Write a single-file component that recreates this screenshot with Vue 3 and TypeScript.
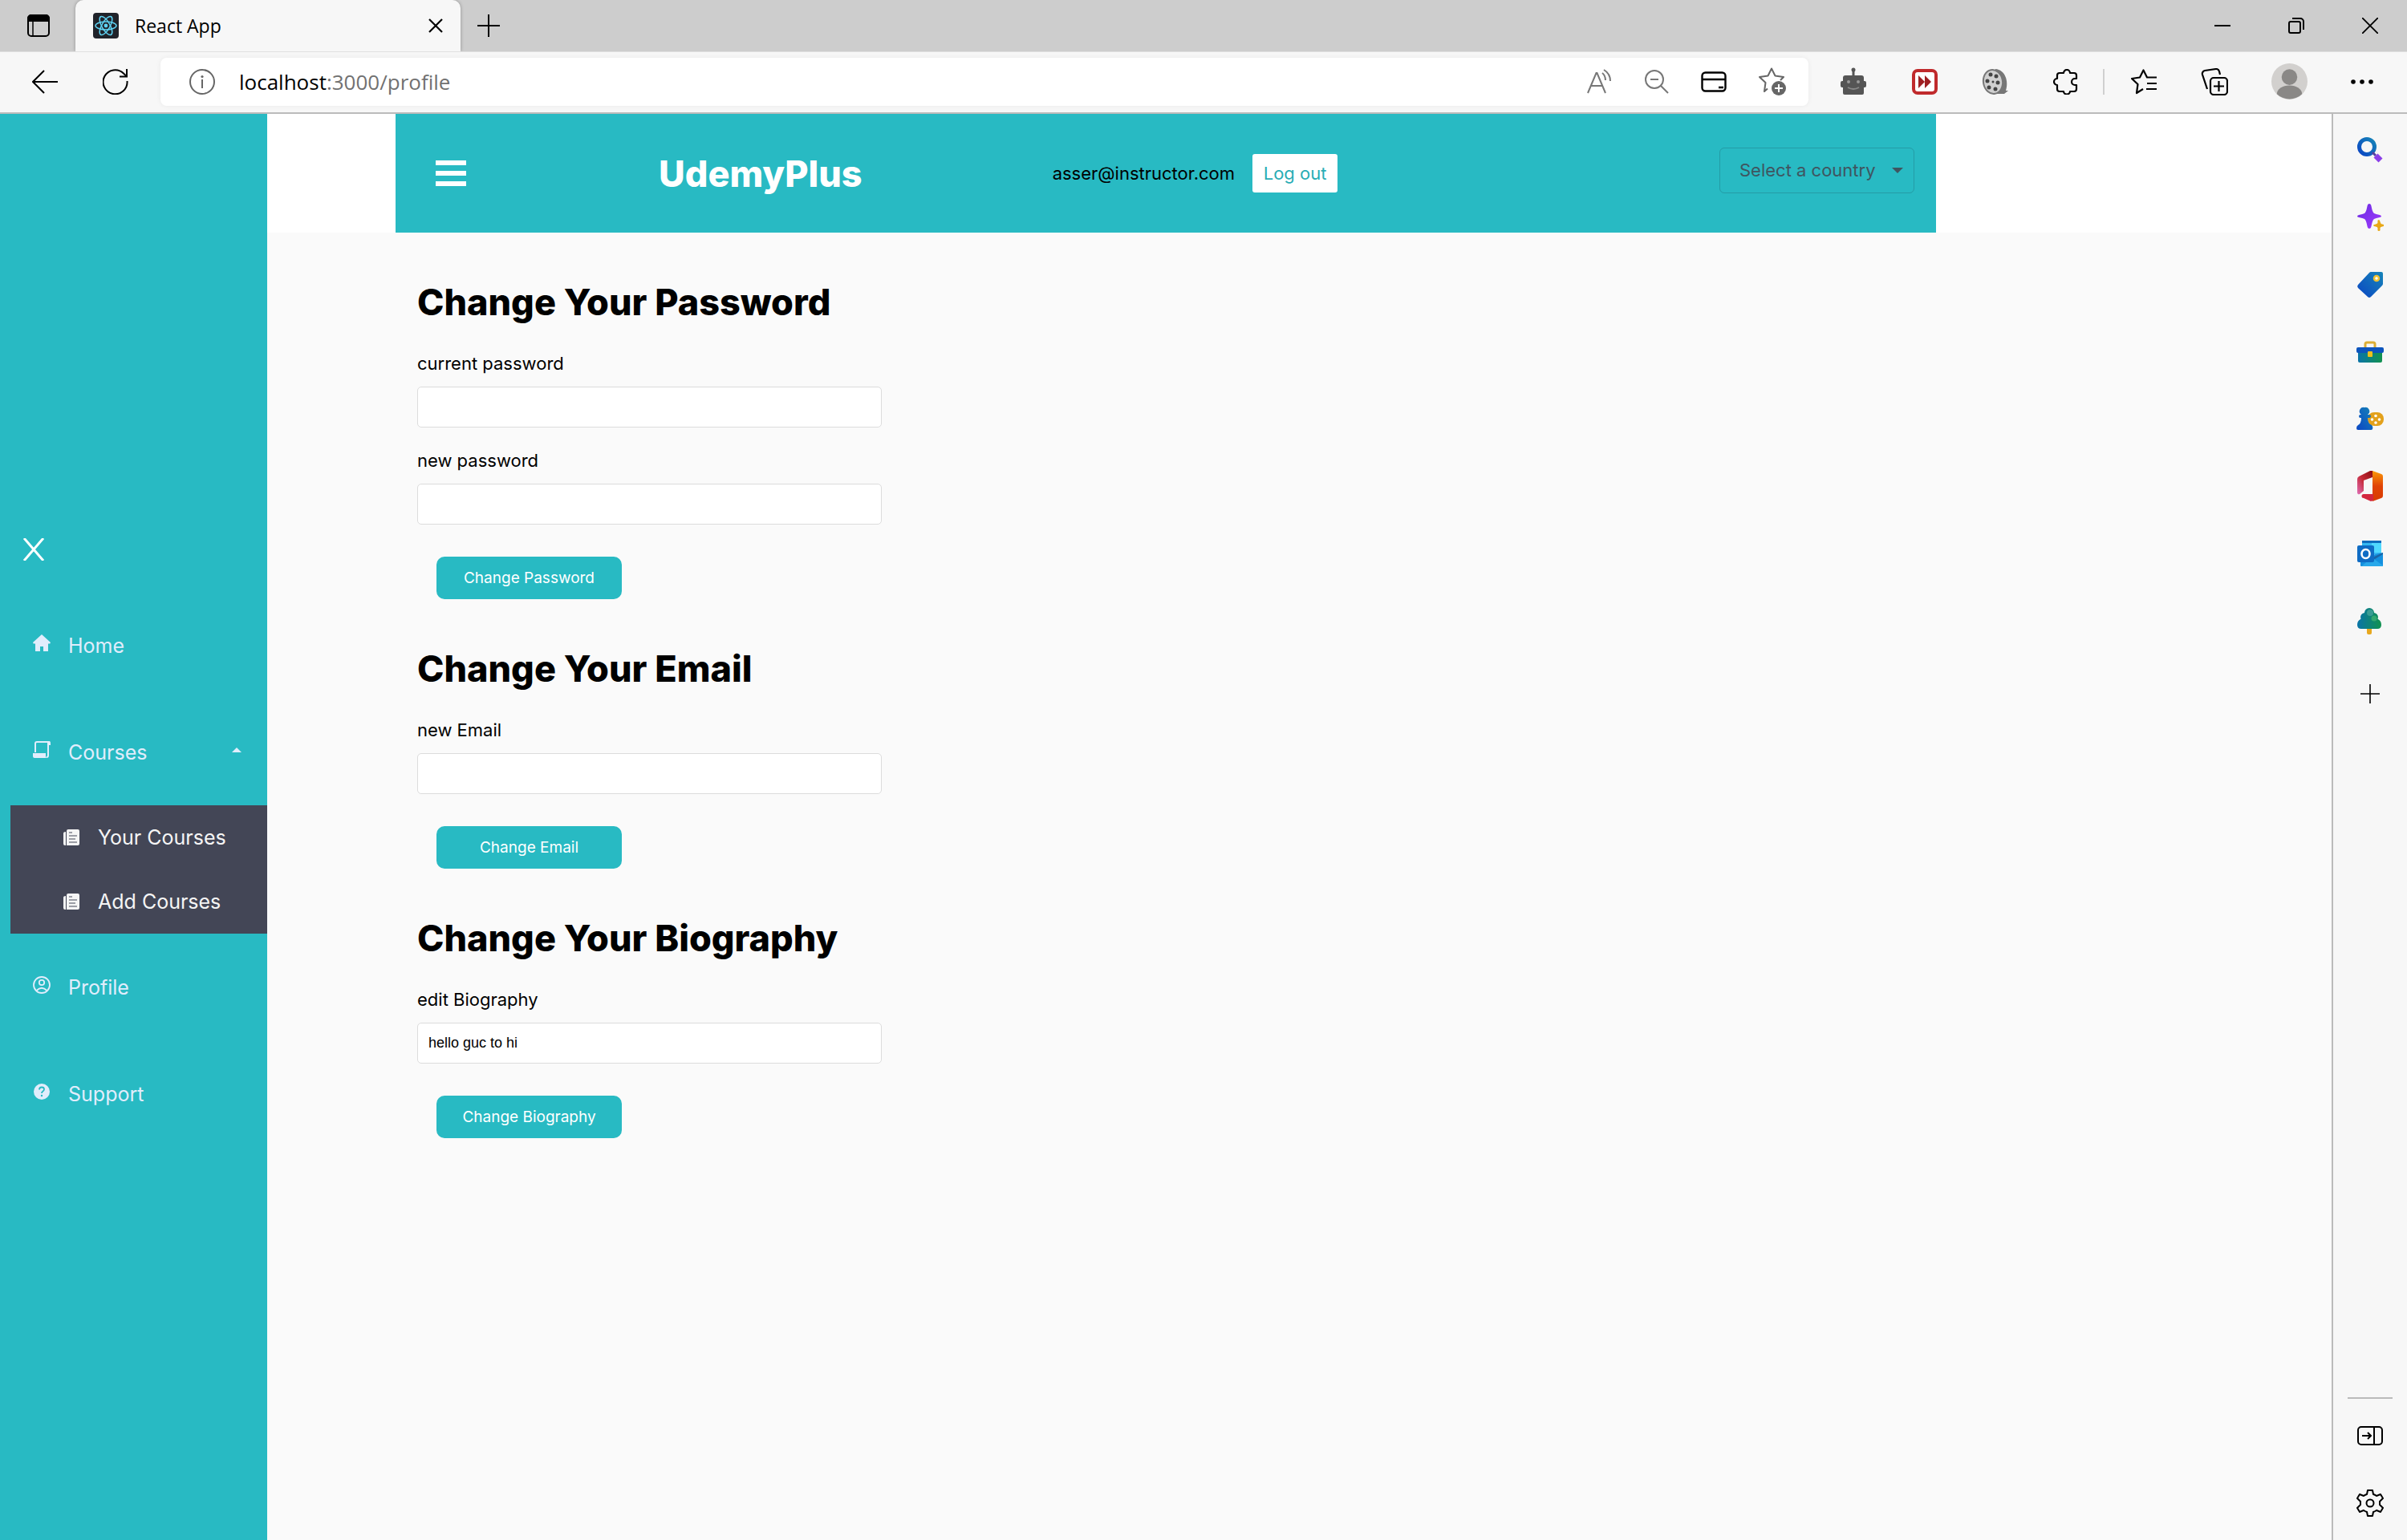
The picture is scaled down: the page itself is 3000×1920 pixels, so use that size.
<script setup lang="ts">
import { ref } from 'vue'

interface Field {
  id: string
  label: string
  type: string
  value: string
}

interface Section {
  title: string
  action: string
  fields: Field[]
}

const sections = ref<Section[]>([
  {
    title: 'Change Your Password',
    action: 'Change Password',
    fields: [
      { id: 'current-password', label: 'current password', type: 'password', value: '' },
      { id: 'new-password', label: 'new password', type: 'password', value: '' },
    ],
  },
  {
    title: 'Change Your Email',
    action: 'Change Email',
    fields: [{ id: 'new-email', label: 'new Email', type: 'email', value: '' }],
  },
  {
    title: 'Change Your Biography',
    action: 'Change Biography',
    fields: [{ id: 'biography', label: 'edit Biography', type: 'text', value: 'hello guc to hi' }],
  },
])

const address = ref(':3000/profile')
const subLinks = ['Your Courses', 'Add Courses']
</script>

<template>
  <div class="browser">
    <div class="tab-strip">
      <button class="icon-button tab-menu" aria-label="Tab actions">
        <svg width="28" height="28" viewBox="0 0 28 28" fill="none" stroke="#000" stroke-width="2">
          <rect x="1" y="1" width="26" height="26" rx="4" />
          <path d="M1 8V5a4 4 0 0 1 4-4h18a4 4 0 0 1 4 4v3z" fill="#000" />
          <path d="M7 8v18" stroke-width="1.5" />
        </svg>
      </button>
      <div class="tab">
        <svg width="32" height="32" viewBox="0 0 32 32" fill="none" stroke="#5fd3f3" stroke-width="1.5">
          <rect width="32" height="32" rx="4" fill="#20232a" stroke="none" />
          <ellipse cx="16" cy="16" rx="13" ry="5" />
          <ellipse cx="16" cy="16" rx="13" ry="5" transform="rotate(60 16 16)" />
          <ellipse cx="16" cy="16" rx="13" ry="5" transform="rotate(120 16 16)" />
          <circle cx="16" cy="16" r="2.4" fill="#5fd3f3" stroke="none" />
        </svg>
        <span class="tab-title">React App</span>
        <button class="icon-button" aria-label="Close tab">
          <svg width="18" height="18" viewBox="0 0 18 18" stroke="#000" stroke-width="2.2">
            <path d="M1 1l16 16M17 1L1 17" />
          </svg>
        </button>
      </div>
      <button class="icon-button new-tab" aria-label="New tab">
        <svg width="28" height="28" viewBox="0 0 28 28" stroke="#000" stroke-width="2">
          <path d="M14 0v28M0 14h28" />
        </svg>
      </button>
      <div class="window-controls">
        <button class="icon-button" aria-label="Minimize">
          <svg width="20" height="20" viewBox="0 0 20 20" stroke="#000" stroke-width="2"><path d="M0 10h20" /></svg>
        </button>
        <button class="icon-button" aria-label="Restore">
          <svg width="20" height="20" viewBox="0 0 20 20" fill="none" stroke="#000" stroke-width="2">
            <rect x="1" y="5" width="14" height="14" rx="2" />
            <path d="M5 1h10a4 4 0 0 1 4 4v10" />
          </svg>
        </button>
        <button class="icon-button" aria-label="Close window">
          <svg width="20" height="20" viewBox="0 0 20 20" stroke="#000" stroke-width="1.8"><path d="M0 0l20 20M20 0L0 20" /></svg>
        </button>
      </div>
    </div>

    <div class="toolbar">
      <button class="icon-button" aria-label="Back">
        <svg width="32" height="32" viewBox="0 0 32 32" fill="none" stroke="#000" stroke-width="2">
          <path d="M32 16H1M15 2L1 16l14 14" />
        </svg>
      </button>
      <button class="icon-button reload" aria-label="Refresh">
        <svg width="32" height="32" viewBox="0 0 32 32" fill="none" stroke="#000" stroke-width="2">
          <path d="M30.500 15A15 15 0 1 1 26 5.500l3.500 3.500" />
          <path d="M30 0v9.500h-9" />
        </svg>
      </button>
      <div class="address">
        <svg width="32" height="32" viewBox="0 0 32 32" fill="none" stroke="#666" stroke-width="2">
          <circle cx="16" cy="16" r="15" />
          <path d="M16 13v11" />
          <circle cx="16" cy="9.500" r="1.600" fill="#666" stroke="none" />
        </svg>
        <div class="url">
          <label for="address">localhost</label>
          <input id="address" v-model="address" type="text" />
        </div>
        <div class="address-actions">
          <svg width="32" height="32" viewBox="0 0 32 32" fill="none" stroke="#777" stroke-width="2">
            <path d="M1 30L11.500 5h1L23 30M5 21h14" />
            <path d="M19 5c2.500 2 4 5 4 9M21 1c5 3 8 7 8 14" />
          </svg>
          <svg width="32" height="32" viewBox="0 0 32 32" fill="none" stroke="#777" stroke-width="2">
            <circle cx="13" cy="13" r="11" />
            <path d="M21 21l9 9M8 13h10" />
          </svg>
          <svg width="32" height="32" viewBox="0 0 32 32" fill="none" stroke="#000" stroke-width="2.400">
            <rect x="1.500" y="4.500" width="29" height="23" rx="4" />
            <path d="M1.500 13h29M22 23h6" />
          </svg>
          <svg width="36" height="36" viewBox="0 0 36 36" fill="none" stroke="#666" stroke-width="2">
            <path d="M12 26.500L8 30l1.500-11L2 12l10.500-1.500L17 1.500l4.500 9L32 12l-4 4" stroke-linejoin="round" />
            <circle cx="26" cy="26" r="9" fill="#666" stroke="none" />
            <path d="M26 21v10M21 26h10" stroke="#fff" />
          </svg>
        </div>
      </div>
      <div class="extensions">
        <svg width="36" height="36" viewBox="0 0 36 36" fill="#555">
          <path d="M16.500 4h3v6h-3z" />
          <circle cx="18" cy="3" r="2.500" />
          <path d="M8 10h20a3 3 0 0 1 3 3v4h1a2 2 0 0 1 2 2v4a2 2 0 0 1-2 2h-1v7a2 2 0 0 1-2 2H7a2 2 0 0 1-2-2v-7H4a2 2 0 0 1-2-2v-4a2 2 0 0 1 2-2h1v-4a3 3 0 0 1 3-3z" />
          <circle cx="12" cy="18" r="2" fill="#999" />
          <circle cx="24" cy="18" r="2" fill="#999" />
          <path d="M11 25q7 4 14 0" fill="none" stroke="#888" stroke-width="2" />
        </svg>
        <svg width="32" height="32" viewBox="0 0 32 32">
          <rect x="2" y="2" width="28" height="28" rx="5" fill="#fff" stroke="#c02a2c" stroke-width="4" />
          <path d="M8 8l8 8-8 8zM16 8l8 8-8 8z" fill="#9f1f22" />
        </svg>
        <svg width="34" height="34" viewBox="0 0 34 34">
          <path d="M17 1c12 1 17 15 13 27h3l-5 4H12z" fill="#777" />
          <ellipse cx="14" cy="17" rx="12" ry="15" fill="#d0d0d0" stroke="#777" stroke-width="2" transform="rotate(-10 14 17)" />
          <g fill="#444">
            <circle cx="11" cy="8" r="2.500" /><circle cx="18" cy="10" r="2.500" /><circle cx="7" cy="16" r="2.500" />
            <circle cx="20" cy="18" r="2.500" /><circle cx="9" cy="24" r="2.500" /><circle cx="17" cy="26" r="2.500" />
            <circle cx="14" cy="17" r="1.500" />
          </g>
        </svg>
        <svg width="32" height="32" viewBox="0 0 32 32" fill="none" stroke="#000" stroke-width="2.200" stroke-linejoin="round">
          <path d="M8 5h5a4 4 0 0 1 8 0h5a3 3 0 0 1 3 3v4h-2a4 4 0 0 0 0 8h2v5a3 3 0 0 1-3 3h-5a4 3.500 0 0 1-8 0H8a3 3 0 0 1-3-3v-5a4 4 0 0 1 0-8V8a3 3 0 0 1 3-3z" />
        </svg>
      </div>
      <div class="divider"></div>
      <div class="browser-actions">
        <svg width="34" height="32" viewBox="0 0 34 32" fill="none" stroke="#000" stroke-width="2.200" stroke-linejoin="round">
          <path d="M16 25l-8 5 1.500-11L2 12l10-1.500 4.500-9 4.500 9h12M21 18h12M20 25h13" />
        </svg>
        <svg width="34" height="34" viewBox="0 0 34 34" fill="none" stroke="#000" stroke-width="2.200">
          <rect x="12" y="12" width="21" height="21" rx="4" />
          <path d="M22.500 16v13M16 22.500h13" />
          <path d="M8 26L2 8a4 4 0 0 1 3-5l14-2a4 4 0 0 1 4 3l1 4" />
        </svg>
        <svg width="45" height="45" viewBox="0 0 46 46">
          <circle cx="23" cy="23" r="23" fill="#d2d0ce" />
          <circle cx="23" cy="17.500" r="10" fill="#8a8886" />
          <path d="M7 39a16 11 0 0 1 32 0a23 23 0 0 1-32 0z" fill="#8a8886" />
        </svg>
        <svg width="28" height="8" viewBox="0 0 28 8">
          <circle cx="3" cy="4" r="2.800" /><circle cx="14" cy="4" r="2.800" /><circle cx="25" cy="4" r="2.800" />
        </svg>
      </div>
    </div>

    <div class="window">
      <nav class="side-nav">
        <button class="close-nav" aria-label="Close menu">
          <svg width="28" height="28" viewBox="0 0 28 28" stroke="#fff" stroke-width="3"><path d="M2 0l24 28M26 0L2 28" /></svg>
        </button>
        <a class="nav-link" href="#home">
          <svg width="22" height="22" viewBox="0 0 22 22" fill="currentColor">
            <path d="M11 0l10.500 9.500q1 1.500-1 2H19V21h-6v-6H9v6H3v-9.500H1.500q-2-.5-1-2z" />
          </svg>
          <span>Home</span>
        </a>
        <a class="nav-link" href="#courses">
          <svg width="22" height="22" viewBox="0 0 22 22" fill="none" stroke="currentColor" stroke-width="2">
            <path d="M3 14V3a2 2 0 0 1 2-2h15v3M19 2v16a2 2 0 0 1-2 2" />
            <path d="M0 15h16v3q0 1.500 1 3H2a2 2 0 0 1-2-2z" fill="currentColor" stroke="none" />
            <path d="M19 0h1a2 2 0 0 1 2 2v3h-3z" fill="currentColor" stroke="none" />
          </svg>
          <span>Courses</span>
          <svg class="caret" width="12" height="6" viewBox="0 0 12 6" fill="currentColor"><path d="M0 6l6-6 6 6z" /></svg>
        </a>
        <div class="sub-nav">
          <a v-for="link in subLinks" :key="link" class="sub-link" href="#courses">
            <svg width="20" height="20" viewBox="0 0 20 20" fill="currentColor">
              <path d="M6 0h12a2 2 0 0 1 2 2v16a2 2 0 0 1-2 2H4V2q0-2 2-2z" />
              <path d="M0 5q0-2 3-2v17H2a2 2 0 0 1-2-2z" />
              <path d="M7 4h4M7 8h10M7 12h8M7 16h10" stroke="#434656" stroke-width="1" />
            </svg>
            <span>{{ link }}</span>
          </a>
        </div>
        <a class="nav-link" href="#profile">
          <svg width="22" height="22" viewBox="0 0 22 22" fill="none" stroke="currentColor" stroke-width="1.800">
            <circle cx="11" cy="11" r="10" />
            <circle cx="11" cy="8" r="3.200" />
            <path d="M4.500 18q6.500-6.500 13 0" />
          </svg>
          <span>Profile</span>
        </a>
        <a class="nav-link" href="#support">
          <svg width="22" height="22" viewBox="0 0 22 22" fill="none">
            <circle cx="11" cy="11" r="10" fill="currentColor" />
            <path d="M8 8.500q0-3 3-3t3 2.500q0 1.500-1.500 2.500T11 13" stroke="#28bac3" stroke-width="1.800" />
            <circle cx="11" cy="16" r="1.200" fill="#28bac3" />
          </svg>
          <span>Support</span>
        </a>
      </nav>

      <div class="page">
        <div class="top">
          <header class="site-header">
            <button class="icon-button" aria-label="Open menu">
              <svg width="38" height="32" viewBox="0 0 38 32" fill="#fff"><path d="M0 0h38v6H0zM0 13h38v6H0zM0 26h38v6H0z" /></svg>
            </button>
            <a class="brand" href="#home">UdemyPlus</a>
            <div class="account">
              <span>asser@instructor.com</span>
              <button class="logout">Log out</button>
            </div>
            <div class="country">
              <select aria-label="Country">
                <option>Select a country</option>
              </select>
              <svg width="14" height="7" viewBox="0 0 14 7" fill="#3f5560"><path d="M0 0h14L7 7z" /></svg>
            </div>
          </header>
        </div>
        <main>
          <form v-for="section in sections" :key="section.title" @submit.prevent>
            <h1>{{ section.title }}</h1>
            <div v-for="field in section.fields" :key="field.id" class="field">
              <label :for="field.id">{{ field.label }}</label>
              <input :id="field.id" v-model="field.value" :type="field.type" autocomplete="off" />
            </div>
            <button class="submit">{{ section.action }}</button>
          </form>
        </main>
      </div>

      <aside class="edge-bar">
        <svg width="34" height="34" viewBox="0 0 34 34" fill="none">
          <circle cx="13" cy="13" r="9.500" stroke="url(#blue)" stroke-width="5" />
          <path d="M20 20l4 4" stroke="#52419c" stroke-width="3" />
          <path d="M24 24l6 6" stroke="#8b3fe8" stroke-width="7" stroke-linejoin="round" />
          <defs>
            <linearGradient id="blue" x1="1" y1="0" x2="0" y2="1">
              <stop offset="0" stop-color="#1684b8" /><stop offset="1" stop-color="#0b46c4" />
            </linearGradient>
            <linearGradient id="teal" x1="0" y1="0" x2="1" y2="0">
              <stop offset="0" stop-color="#0a74a8" /><stop offset="1" stop-color="#12924f" />
            </linearGradient>
            <linearGradient id="violet" x1="0" y1="0" x2="1" y2="1">
              <stop offset="0" stop-color="#6a2be0" /><stop offset="1" stop-color="#a03cff" />
            </linearGradient>
            <linearGradient id="orange" x1="0" y1="0" x2="0" y2="1">
              <stop offset="0" stop-color="#fb9a08" /><stop offset=".5" stop-color="#e04306" /><stop offset="1" stop-color="#d83b01" />
            </linearGradient>
            <linearGradient id="crimson" x1="1" y1="0" x2="0" y2="1">
              <stop offset="0" stop-color="#8c0d12" /><stop offset=".5" stop-color="#c42834" /><stop offset="1" stop-color="#e070b8" />
            </linearGradient>
          </defs>
        </svg>
        <svg width="34" height="34" viewBox="0 0 34 34">
          <path d="M16 0q2 0 2.500 3Q20 11 22 12t7 2q2 .5 2 1.500t-2 1.500q-5 1-7 2t-3.500 9q-.5 3-2.500 3t-2.500-3Q12 20 10 19t-7-2q-2-.5-2-1.500T3 14q5-1 7-2t3.500-9Q14 0 16 0z" fill="url(#violet)" />
          <path d="M28 20q1 0 1.500 2.500t2.500 3q3 .5 3 1.500t-3 1.500-2.500 3T28 34t-1.500-2.500-2.500-3-3-1.500 3-1.500 2.500-3T28 20z" fill="#e8a817" />
        </svg>
        <svg width="34" height="34" viewBox="0 0 34 34">
          <path d="M18 1h13a2 2 0 0 1 2 2v13a3 3 0 0 1-1 2L18 32a3 3 0 0 1-4 0L2 21a3 3 0 0 1 0-4L16 2a3 3 0 0 1 2-1z" fill="url(#blue)" />
          <circle cx="25" cy="9" r="3" fill="#fff" stroke="#efc133" stroke-width="2.500" />
        </svg>
        <svg width="34" height="34" viewBox="0 0 34 34">
          <path d="M11 12V7a2 2 0 0 1 2-2h8a2 2 0 0 1 2 2v5" fill="none" stroke="#dcae35" stroke-width="3" />
          <path d="M2 15h30v13a2 2 0 0 1-2 2H4a2 2 0 0 1-2-2z" fill="url(#teal)" />
          <rect y="11" width="34" height="7" rx="2" fill="#0c54bd" />
          <rect x="14" y="16" width="6" height="7" rx="1" fill="#edc01c" />
        </svg>
        <svg width="34" height="34" viewBox="0 0 34 34">
          <rect x="14" y="8" width="20" height="17" rx="8" fill="#e3a11b" />
          <g fill="#fff"><circle cx="24" cy="12.500" r="1.800" /><circle cx="24" cy="21" r="1.800" /><circle cx="19.500" cy="17" r="1.800" /><circle cx="28.500" cy="17" r="1.800" /></g>
          <path d="M10 2a5 5 0 0 1 4 9h2q2 0 2 2t-2 2h-2q0 7 5 9 2 2 1 5-.5 1-2 1H2q-2 0-2-2 0-3 2-4 4-2 4-9H5q-2 0-2-2t2-2h1a5 5 0 0 1 4-9z" fill="url(#blue)" />
        </svg>
        <svg class="office" width="34" height="38" viewBox="0 0 34 38">
          <path d="M20 0l11 4a3 3 0 0 1 2 3v24a3 3 0 0 1-2 3l-11 4z" fill="url(#orange)" />
          <path d="M17 0h3v8L9 12v13l-5 4a2 2 0 0 1-3-2V11a4 4 0 0 1 2-4z" fill="url(#crimson)" />
          <path d="M9 29h12v8l-3 1-9-4a2 2 0 0 1 0-5z" fill="#d3273f" />
        </svg>
        <svg width="34" height="34" viewBox="0 0 34 34">
          <path d="M8 1h22a1 1 0 0 1 1 1v16H7V2a1 1 0 0 1 1-1z" fill="#35b8f1" />
          <path d="M7 1h24v3H7z" fill="#0f6cbd" />
          <path d="M19 4h12v12H19z" fill="#50d9ff" />
          <path d="M5 18l14 1 14-3v16a1 1 0 0 1-1 1H6a1 1 0 0 1-1-1z" fill="#1490df" />
          <path d="M33 16v2L8 33H6l14-11z" fill="#1b65a6" />
          <path d="M19 22l14 10v1H6z" fill="#28a8ea" />
          <rect x="1" y="7" width="21" height="21" rx="2" fill="#0f6cc4" />
          <ellipse cx="11.500" cy="17.500" rx="5" ry="5.500" fill="none" stroke="#fff" stroke-width="2.600" />
        </svg>
        <svg width="34" height="34" viewBox="0 0 34 34">
          <rect x="13" y="24" width="6" height="10" rx="2" fill="#e8a81e" />
          <path d="M16 1a6 6 0 0 1 6 6q5 1 5 6-1 1 0 2 4 2 4 7t-5 5H6q-5 0-5-5t4-7q1-1 0-2 0-5 5-6a6 6 0 0 1 6-6z" fill="url(#teal)" />
          <circle cx="17" cy="7" r="4" fill="#3b9c93" /><circle cx="22" cy="14" r="3.500" fill="#35a870" />
        </svg>
        <svg class="add" width="24" height="24" viewBox="0 0 24 24" stroke="#000" stroke-width="1.600"><path d="M12 0v24M0 12h24" /></svg>
        <div class="edge-rule"></div>
        <svg width="34" height="34" viewBox="0 0 34 34" fill="none" stroke="#000" stroke-width="2">
          <rect x="2" y="6" width="30" height="22" rx="4" />
          <path d="M22 6v22M7 17h11M14 13l4 4-4 4" />
        </svg>
        <svg width="34" height="34" viewBox="0 0 34 34" fill="none" stroke="#000" stroke-width="2" stroke-linejoin="round">
          <path d="M14 1h6l1 5q2 .5 4 2l5-2 3 5-4 4v4l4 4-3 5-5-2q-2 1.500-4 2l-1 5h-6l-1-5q-2-.5-4-2l-5 2-3-5 4-4v-4l-4-4 3-5 5 2q2-1.500 4-2z" />
          <circle cx="17" cy="17" r="4.500" />
        </svg>
      </aside>
    </div>
  </div>
</template>

<style>
body {
  margin: 0;
}
</style>

<style scoped>
* {
  box-sizing: border-box;
}
svg {
  display: block;
  flex: none;
}
button,
input,
select {
  font: inherit;
  margin: 0;
}
a {
  color: inherit;
  text-decoration: none;
}
.browser {
  min-height: 100vh;
  display: flex;
  flex-direction: column;
  background: #f7f7f7;
  color: #000;
  font-family: Inter, sans-serif;
  font-size: 22px;
}
.icon-button {
  display: block;
  padding: 0;
  border: 0;
  background: none;
}

/* Tabs and window buttons */
.tab-strip {
  display: flex;
  align-items: center;
  height: 64px;
  background: #cdcdcd;
  font-family: "Open Sans", sans-serif;
}
.tab-menu {
  margin: 0 32px 0 34px;
}
.tab {
  display: flex;
  align-items: center;
  width: 480px;
  height: 64px;
  padding: 0 22px;
  border-radius: 10px 10px 0 0;
  background: #f7f7f7;
  box-shadow: 0 0 4px rgba(0, 0, 0, 0.3);
  clip-path: inset(0 -6px 0 -6px);
}
.tab-title {
  flex: 1;
  padding-left: 20px;
  font-size: 23px;
  line-height: 32px;
}
.new-tab {
  margin-left: 21px;
}
.window-controls {
  display: flex;
  gap: 72px;
  margin-left: auto;
  padding-right: 36px;
}

/* Toolbar */
.toolbar {
  display: flex;
  align-items: center;
  height: 78px;
  padding: 0 42px 2px 40px;
  border-bottom: 2px solid #bbb;
  border-top: 1px solid #e0e0e0;
}
.reload {
  margin-left: 56px;
}
.address {
  flex: 1;
  display: flex;
  align-items: center;
  height: 60px;
  margin-left: 40px;
  padding: 0 27px 0 36px;
  border-radius: 8px;
  background: #fff;
  box-shadow: 0 0 6px rgba(0, 0, 0, 0.06);
}
.url {
  flex: 1;
  display: flex;
  align-items: center;
  padding-left: 30px;
  font-family: "Open Sans", sans-serif;
  font-size: 26px;
}
.url input {
  flex: 1;
  padding: 0;
  border: 0;
  outline: 0;
  background: none;
  color: #717171;
}
.address-actions {
  display: flex;
  align-items: center;
  gap: 39px;
}
.extensions {
  display: flex;
  align-items: center;
  gap: 55px;
  margin-left: 38px;
}
.divider {
  width: 2px;
  height: 32px;
  margin: 0 32px 0 30px;
  background: #d0d0d0;
}
.browser-actions {
  display: flex;
  align-items: center;
  gap: 54px;
}

/* Page window */
.window {
  flex: 1;
  display: flex;
}
.side-nav {
  display: flex;
  flex-direction: column;
  justify-content: center;
  width: 333px;
  background: #28bac3;
  color: #e1edfc;
  font-size: 25px;
}
.close-nav {
  display: flex;
  align-items: center;
  height: 106px;
  padding: 0 28px;
  border: 0;
  background: none;
}
.nav-link {
  display: flex;
  align-items: center;
  gap: 22px;
  height: 133px;
  padding: 0 32px 0 41px;
}
.nav-link > svg {
  margin-bottom: 6px;
}
.nav-link > .caret {
  margin-left: auto;
}
.sub-nav {
  margin-left: 13px;
  background: #434656;
  color: #f5f5f5;
}
.sub-link {
  display: flex;
  align-items: center;
  gap: 23px;
  height: 80px;
  padding-left: 66px;
}
.page {
  flex: 1;
  background: #fafafa;
}
.top {
  padding: 0 493px 0 160px;
  background: #fff;
}
.site-header {
  display: flex;
  align-items: center;
  height: 148px;
  padding: 0 27px 0 50px;
  background: #28bac3;
}
.brand {
  margin-left: 240px;
  color: #fff;
  font-size: 45px;
  font-weight: 800;
}
.account {
  display: flex;
  align-items: center;
  gap: 22px;
  margin-left: 237px;
}
.logout {
  width: 106px;
  height: 48px;
  padding: 0;
  border: 0;
  border-radius: 3px;
  background: #fff;
  color: #28adb5;
}
.country {
  position: relative;
  margin: 0 0 8px auto;
}
.country select {
  width: 243px;
  height: 57px;
  padding: 0 24px;
  border: 1px solid #249ca6;
  border-radius: 6px;
  appearance: none;
  background: none;
  color: #3f5560;
}
.country svg {
  position: absolute;
  top: 25px;
  right: 14px;
  pointer-events: none;
}

/* Profile forms */
main {
  display: flex;
  flex-direction: column;
  gap: 55px;
  padding: 55px 187px;
}
h1 {
  margin: 0 0 28px;
  font-size: 45px;
  font-weight: 800;
  line-height: 64px;
}
.field {
  margin-bottom: 26px;
}
.field label {
  display: block;
  margin-bottom: 13px;
  line-height: 32px;
}
.field + .field {
  margin-top: -1px;
}
.field input {
  display: block;
  width: 579px;
  height: 51px;
  padding: 0 13px;
  border: 1px solid #dcdcdc;
  border-radius: 5px;
  background: #fff;
  font-family: "Liberation Sans", sans-serif;
  font-size: 18px;
}
.submit {
  display: block;
  width: 231px;
  height: 53px;
  margin: 40px 0 0 24px;
  padding: 0;
  border: 0;
  border-radius: 10px;
  background: #28bac3;
  color: #fff;
  font-size: 19px;
}

/* Browser side bar */
.edge-bar {
  display: flex;
  flex-direction: column;
  align-items: center;
  gap: 50px;
  width: 94px;
  padding: 28px 0 29px;
  border-left: 2px solid #bbb;
}
.office {
  margin: -3px 0 -2px;
}
.add {
  margin: 12px 0;
}
.edge-rule {
  width: 56px;
  height: 2px;
  margin: auto 0 -21px;
  background: #bbb;
}
</style>
